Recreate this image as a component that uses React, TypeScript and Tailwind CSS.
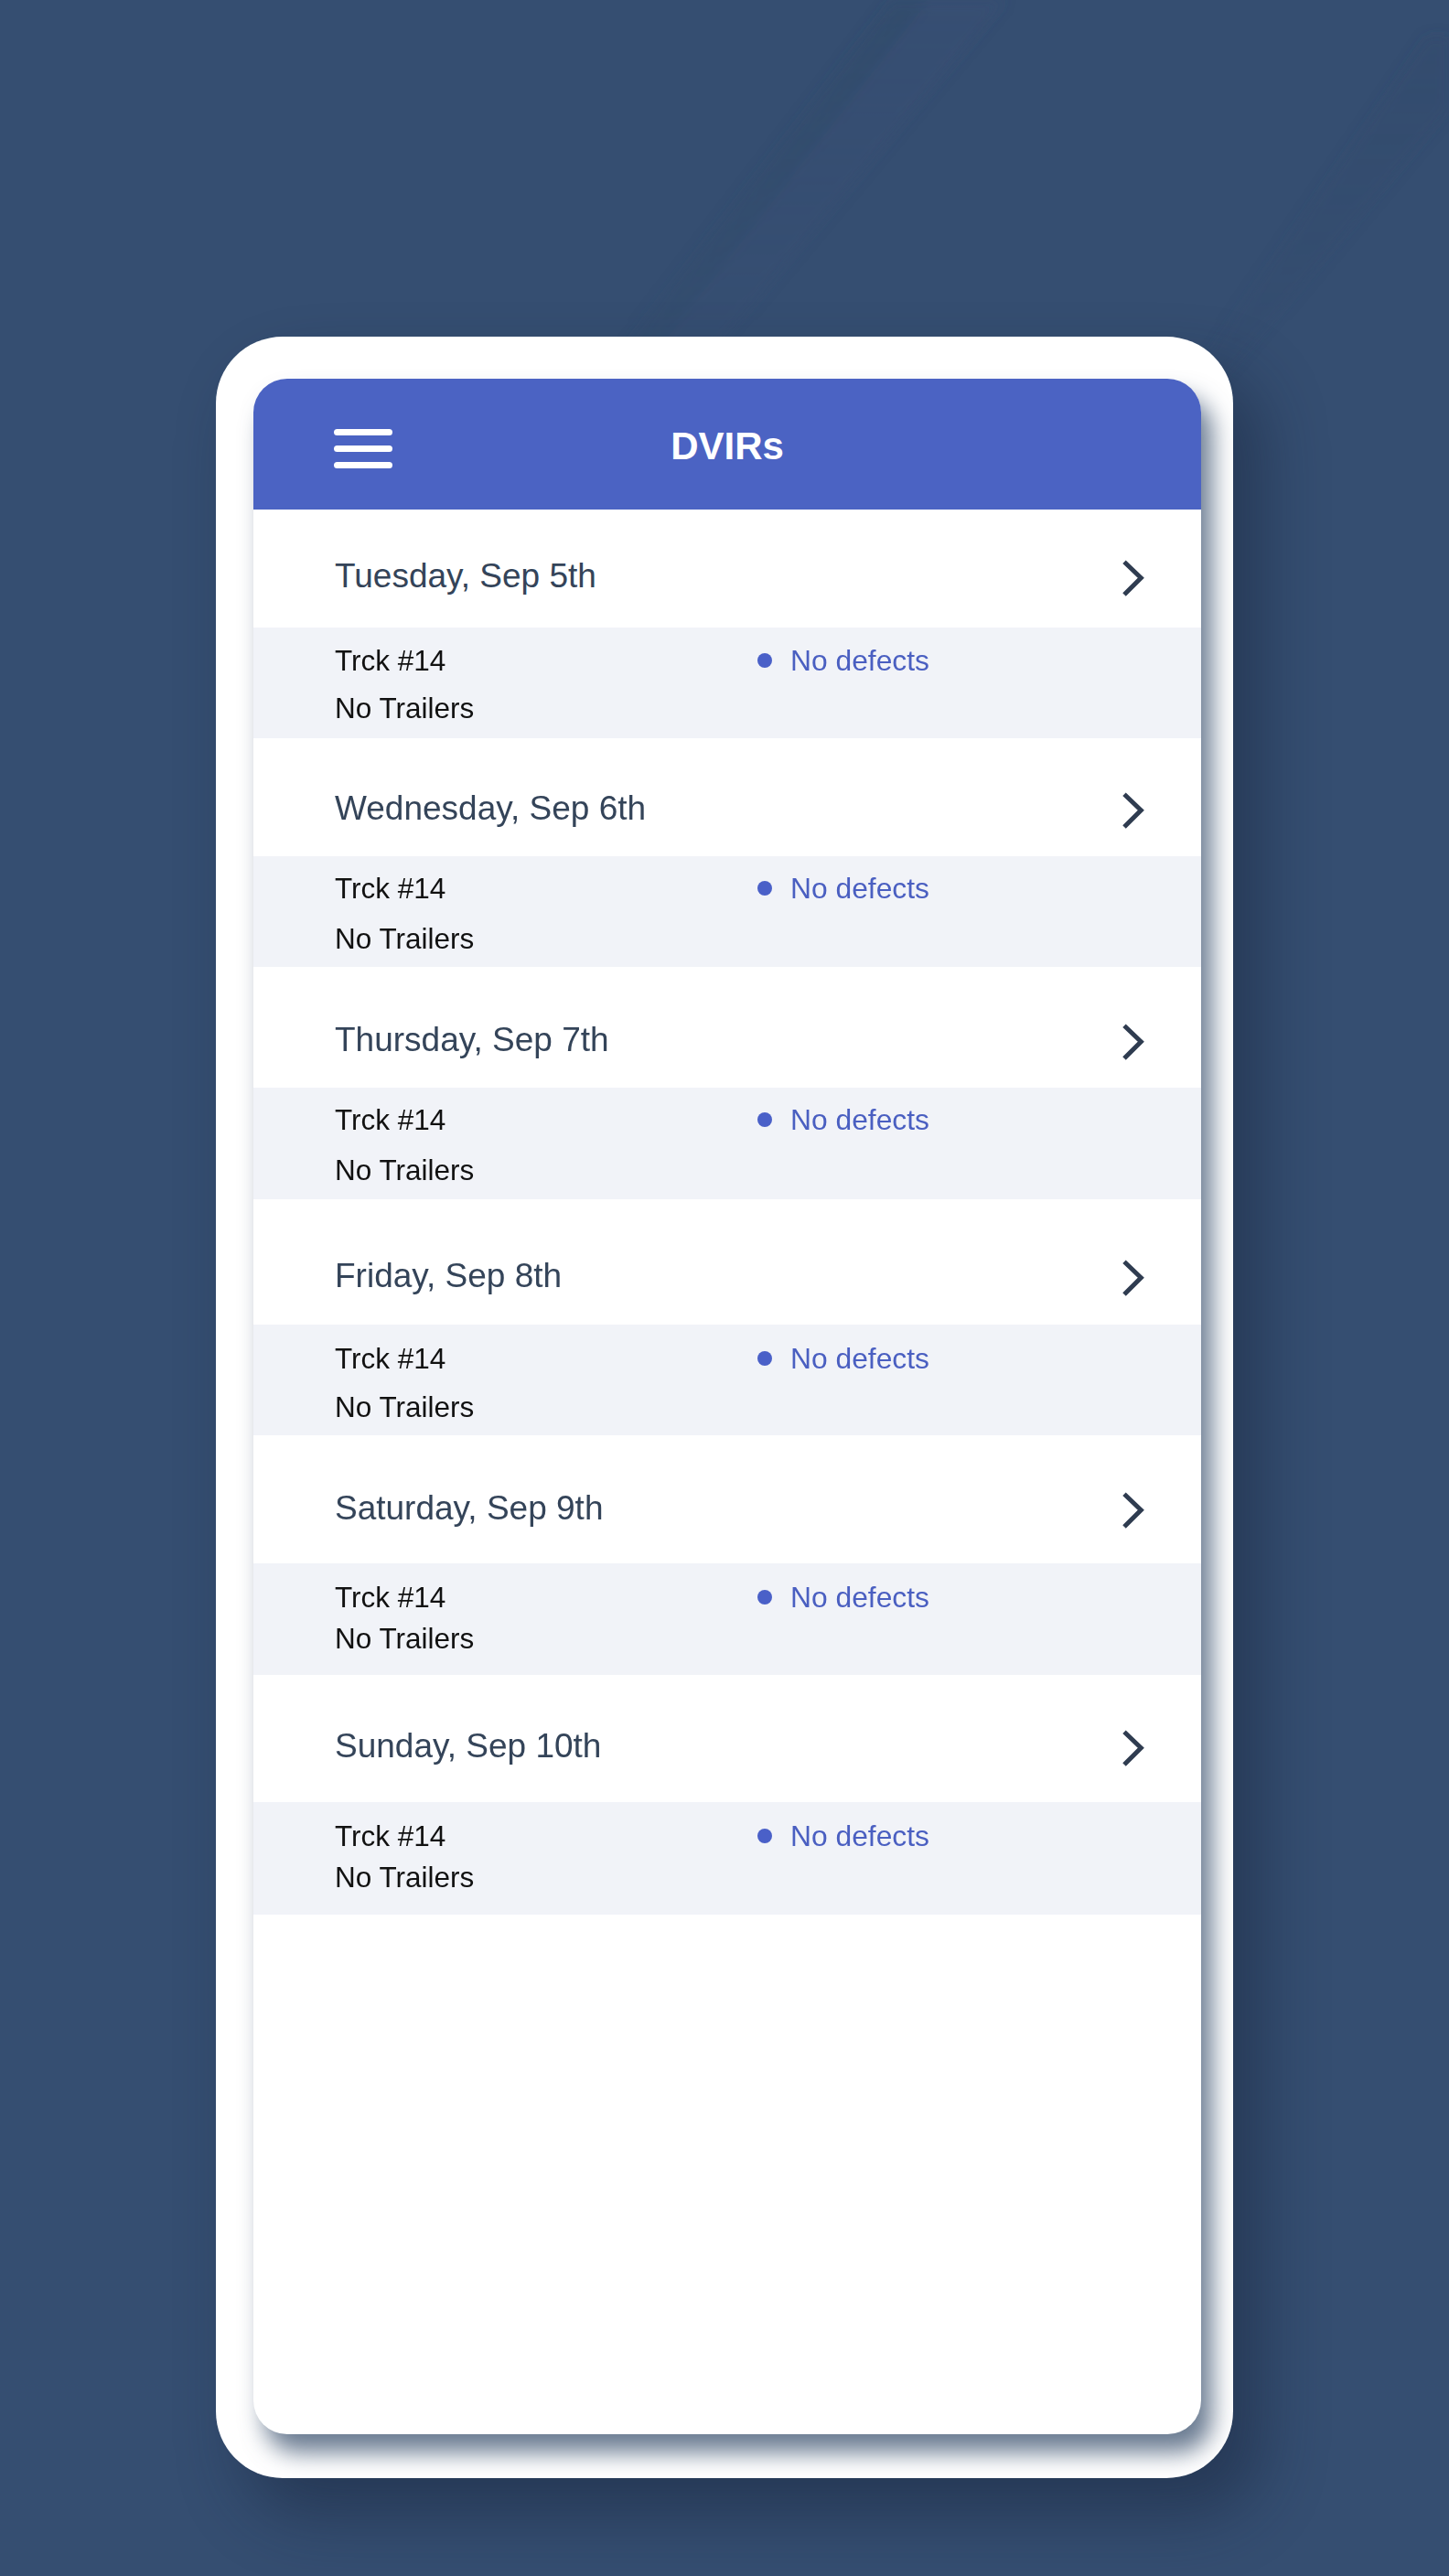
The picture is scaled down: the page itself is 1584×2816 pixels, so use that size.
import React from 'react';

type Row = {
  day: string;
  whiteH: string;
  whitePt: string;
  grayH: string;
  grayPt: string;
  gap: string;
};

const rows: Row[] = [
  { day: 'Tuesday, Sep 5th', whiteH: 'h-[129px]', whitePt: 'pt-[51px]', grayH: 'h-[121px]', grayPt: 'pt-[18px]', gap: 'gap-[16px]' },
  { day: 'Wednesday, Sep 6th', whiteH: 'h-[129px]', whitePt: 'pt-[55px]', grayH: 'h-[121px]', grayPt: 'pt-[17px]', gap: 'gap-[19px]' },
  { day: 'Thursday, Sep 7th', whiteH: 'h-[132px]', whitePt: 'pt-[58px]', grayH: 'h-[122px]', grayPt: 'pt-[17px]', gap: 'gap-[19px]' },
  { day: 'Friday, Sep 8th', whiteH: 'h-[137px]', whitePt: 'pt-[62px]', grayH: 'h-[121px]', grayPt: 'pt-[19px]', gap: 'gap-[17px]' },
  { day: 'Saturday, Sep 9th', whiteH: 'h-[140px]', whitePt: 'pt-[58px]', grayH: 'h-[122px]', grayPt: 'pt-[19px]', gap: 'gap-[9px]' },
  { day: 'Sunday, Sep 10th', whiteH: 'h-[139px]', whitePt: 'pt-[56px]', grayH: 'h-[123px]', grayPt: 'pt-[19px]', gap: 'gap-[9px]' },
];

const Chevron: React.FC = () => (
  <svg width="30" height="48" viewBox="0 0 30 48" fill="none" className="shrink-0">
    <path d="M6 6.3 L24.3 23.7 L6 42" stroke="#2f3c50" strokeWidth="5" strokeLinejoin="miter" />
  </svg>
);

const Hamburger: React.FC = () => (
  <div className="flex flex-col gap-[11px] w-[64px] mt-[9px]">
    <span className="block h-[7px] w-full rounded-full bg-white" />
    <span className="block h-[7px] w-full rounded-full bg-white" />
    <span className="block h-[7px] w-full rounded-full bg-white" />
  </div>
);

const App: React.FC = () => {
  return (
    <div className="relative min-h-[2816px] bg-[#354e71] font-['Liberation_Sans',Arial,sans-serif] overflow-hidden">
      {/* faint diagonal streaks in the backdrop */}
      <svg className="absolute left-0 top-0" width="1584" height="700" viewBox="0 0 1584 700">
        <defs>
          <linearGradient id="fade" x1="0" y1="0" x2="0" y2="1">
            <stop offset="0" stopColor="#fff" stopOpacity="1" />
            <stop offset="1" stopColor="#fff" stopOpacity="0" />
          </linearGradient>
          <mask id="m">
            <rect width="1584" height="700" fill="url(#fade)" />
          </mask>
          <filter id="b"><feGaussianBlur stdDeviation="7" /></filter>
        </defs>
        <g mask="url(#m)" filter="url(#b)">
          <polygon points="975,0 1015,0 690,420 650,420" fill="#2f4866" opacity="0.3" />
          <polygon points="1015,0 1100,0 750,420 690,420" fill="#3a4b76" opacity="0.25" />
          <polygon points="1560,40 1584,40 1584,120 1300,460 1270,460" fill="#2f4866" opacity="0.25" />
        </g>
      </svg>

      <div className="relative flex justify-center pt-[368px]">
        <div className="w-[1112px] h-[2341px] rounded-[73px] bg-white overflow-hidden pl-[41px] pr-[35px] pt-[46px] pb-[48px] shadow-[30px_40px_70px_rgba(20,32,54,0.45)]">
          <div className="h-full rounded-[37px] bg-white overflow-hidden flex flex-col shadow-[12px_20px_26px_rgba(58,80,110,0.75)]">
            <header className="h-[143px] shrink-0 bg-[#4b63c3] flex items-center">
              <div className="w-[200px] pl-[88px] flex">
                <Hamburger />
              </div>
              <h1 className="flex-1 text-center text-white text-[42px] font-bold leading-none mt-[4px]">DVIRs</h1>
              <div className="w-[200px]" />
            </header>

            <div className="flex flex-col">
              {rows.map((row) => (
                <div key={row.day}>
                  <div className={`${row.whiteH} ${row.whitePt} bg-white pl-[89px] pr-[60px] flex justify-between items-start`}>
                    <span className="text-[37px] leading-[44px] text-[#344459]">{row.day}</span>
                    <Chevron />
                  </div>
                  <div className={`${row.grayH} ${row.grayPt} bg-[#f1f3f8] pl-[89px] flex items-start`}>
                    <div className={`w-[462px] flex flex-col ${row.gap} text-[31.5px] leading-[36px] text-[#111111]`}>
                      <span>Trck #14</span>
                      <span>No Trailers</span>
                    </div>
                    <div className="h-[36px] flex items-center gap-[20px]">
                      <span className="block w-[16px] h-[16px] rounded-full bg-[#4a60c8]" />
                      <span className="text-[31.8px] leading-[36px] text-[#4a5fc1]">No defects</span>
                    </div>
                  </div>
                </div>
              ))}
            </div>
          </div>
        </div>
      </div>
    </div>
  );
};

export default App;
